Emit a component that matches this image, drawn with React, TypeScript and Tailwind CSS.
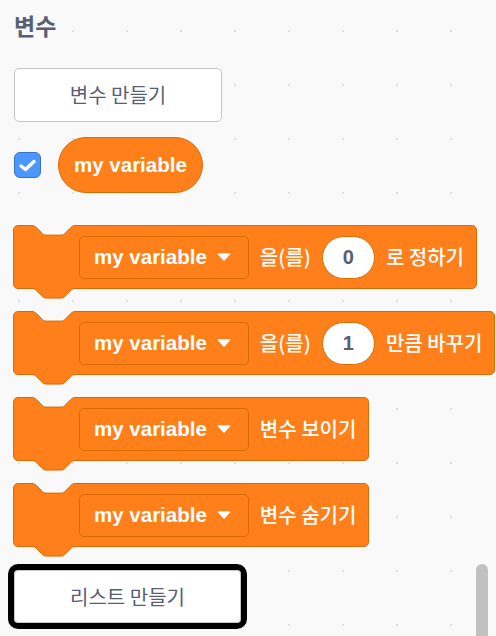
import React from 'react';

const latin = "font-['Liberation_Sans','Noto_Sans_CJK_KR',sans-serif]";
const korean = "font-['Noto_Sans_CJK_KR','Liberation_Sans',sans-serif]";

// scratch notch, scaled 1.2
const notch =
  'c 2.4,0 3.6,1.2 4.8,2.4 l 4.8,4.8 c 1.2,1.2 2.4,2.4 4.8,2.4 h 14.4 c 2.4,0 3.6,-1.2 4.8,-2.4 l 4.8,-4.8 c 1.2,-1.2 2.4,-2.4 4.8,-2.4';

function Label({ text }: { text: string }) {
  return <span className={`${korean} text-[20px] font-medium text-white whitespace-nowrap`}>{text}</span>;
}

function VarDropdown() {
  return (
    <div className="flex h-[43px] items-center rounded-[5px] border border-[#d86c00] bg-[#ff801a] pl-[14px] pr-[17px]">
      <span className={`${latin} text-[20.5px] font-bold text-white whitespace-nowrap`}>my variable</span>
      <svg width="14" height="8" viewBox="0 0 14 8" className="ml-[10px]">
        <path d="M1.5,1 L12.5,1 L7,7 Z" fill="white" stroke="white" strokeWidth="1.5" strokeLinejoin="round" />
      </svg>
    </div>
  );
}

function NumInput({ value }: { value: string }) {
  return (
    <div className="flex h-[43px] w-[53px] items-center justify-center rounded-full border border-[#d86c00] bg-white">
      <span className={`${latin} text-[20px] font-bold text-[#575e75]`}>{value}</span>
    </div>
  );
}

function StackBlock({ children, className = '' }: { children: React.ReactNode; className?: string }) {
  return (
    <div
      className={`relative flex h-[64px] items-center gap-[11px] rounded-[5px] border border-[#d86c00] bg-[#ff801a] pl-[65px] pr-[12px] ${className}`}
    >
      {/* top notch */}
      <svg width="44" height="12" className="absolute left-[18px] top-[-1px] overflow-visible">
        <path d={`M0,0 L0,0.5 ${notch} L43.2,0 Z`} fill="#f9f9f9" />
        <path d={`M0,0.5 ${notch}`} fill="none" stroke="#d86c00" strokeWidth="1" />
      </svg>
      {/* bottom tab */}
      <svg width="44" height="12" className="absolute left-[18px] top-full overflow-visible">
        <path d={`M0,-1 L0,0.5 ${notch} L43.2,-1 Z`} fill="#ff801a" />
        <path d={`M0,0.5 ${notch}`} fill="none" stroke="#d86c00" strokeWidth="1" />
      </svg>
      {children}
    </div>
  );
}

export default function App() {
  return (
    <div className="relative h-[636px] w-[496px] overflow-hidden bg-[#f9f9f9] bg-[radial-gradient(circle,#e2e2e2_1px,transparent_1.6px)] bg-[size:54px_54px] bg-[position:46px_4px]">
      <div className="flex flex-col items-start pl-[13px]">
        <div className={`${korean} ml-[1px] mt-[9px] h-[32px] text-[23px] font-bold leading-[32px] text-[#575e75]`}>변수</div>

        <button
          className={`${korean} ml-[1px] mt-[27px] flex h-[54px] w-[208px] items-center justify-center rounded-[5px] border border-[#c6c6c6] bg-white text-[20px] text-[#575e75]`}
        >
          변수 만들기
        </button>

        <div className="mt-[15px] flex h-[56px] items-center">
          <div className="ml-[1px] flex h-[26px] w-[27px] items-center justify-center rounded-[6px] border border-[#3373cc] bg-[#4c97ff]">
            <svg width="19" height="15" viewBox="0 0 19 15">
              <path d="M3,8 L7.5,11.5 L16,3.5" fill="none" stroke="white" strokeWidth="3.4" strokeLinecap="round" strokeLinejoin="round" />
            </svg>
          </div>
          <div className="ml-[17px] flex h-[56px] items-center rounded-full border border-[#d86c00] bg-[#ff801a] px-[15px]">
            <span className={`${latin} text-[20.5px] font-bold text-white`}>my variable</span>
          </div>
        </div>

        <StackBlock className="mt-[32px]">
          <VarDropdown />
          <Label text="을(를)" />
          <NumInput value="0" />
          <Label text="로 정하기" />
        </StackBlock>

        <StackBlock className="mt-[22px]">
          <VarDropdown />
          <Label text="을(를)" />
          <NumInput value="1" />
          <Label text="만큼 바꾸기" />
        </StackBlock>

        <StackBlock className="mt-[22px]">
          <VarDropdown />
          <Label text="변수 보이기" />
        </StackBlock>

        <StackBlock className="mt-[22px]">
          <VarDropdown />
          <Label text="변수 숨기기" />
        </StackBlock>

        <button
          className={`${korean} ml-[1px] mt-[23px] flex h-[53px] w-[227px] items-center justify-center rounded-[4px] border border-[#c6c6c6] bg-white text-[20px] text-[#575e75] outline outline-[6px] outline-black`}
        >
          리스트 만들기
        </button>
      </div>

      {/* scrollbar */}
      <div className="absolute left-[476px] top-[564px] h-[90px] w-[12px] rounded-t-full bg-[#c1c1c1]" />
    </div>
  );
}
